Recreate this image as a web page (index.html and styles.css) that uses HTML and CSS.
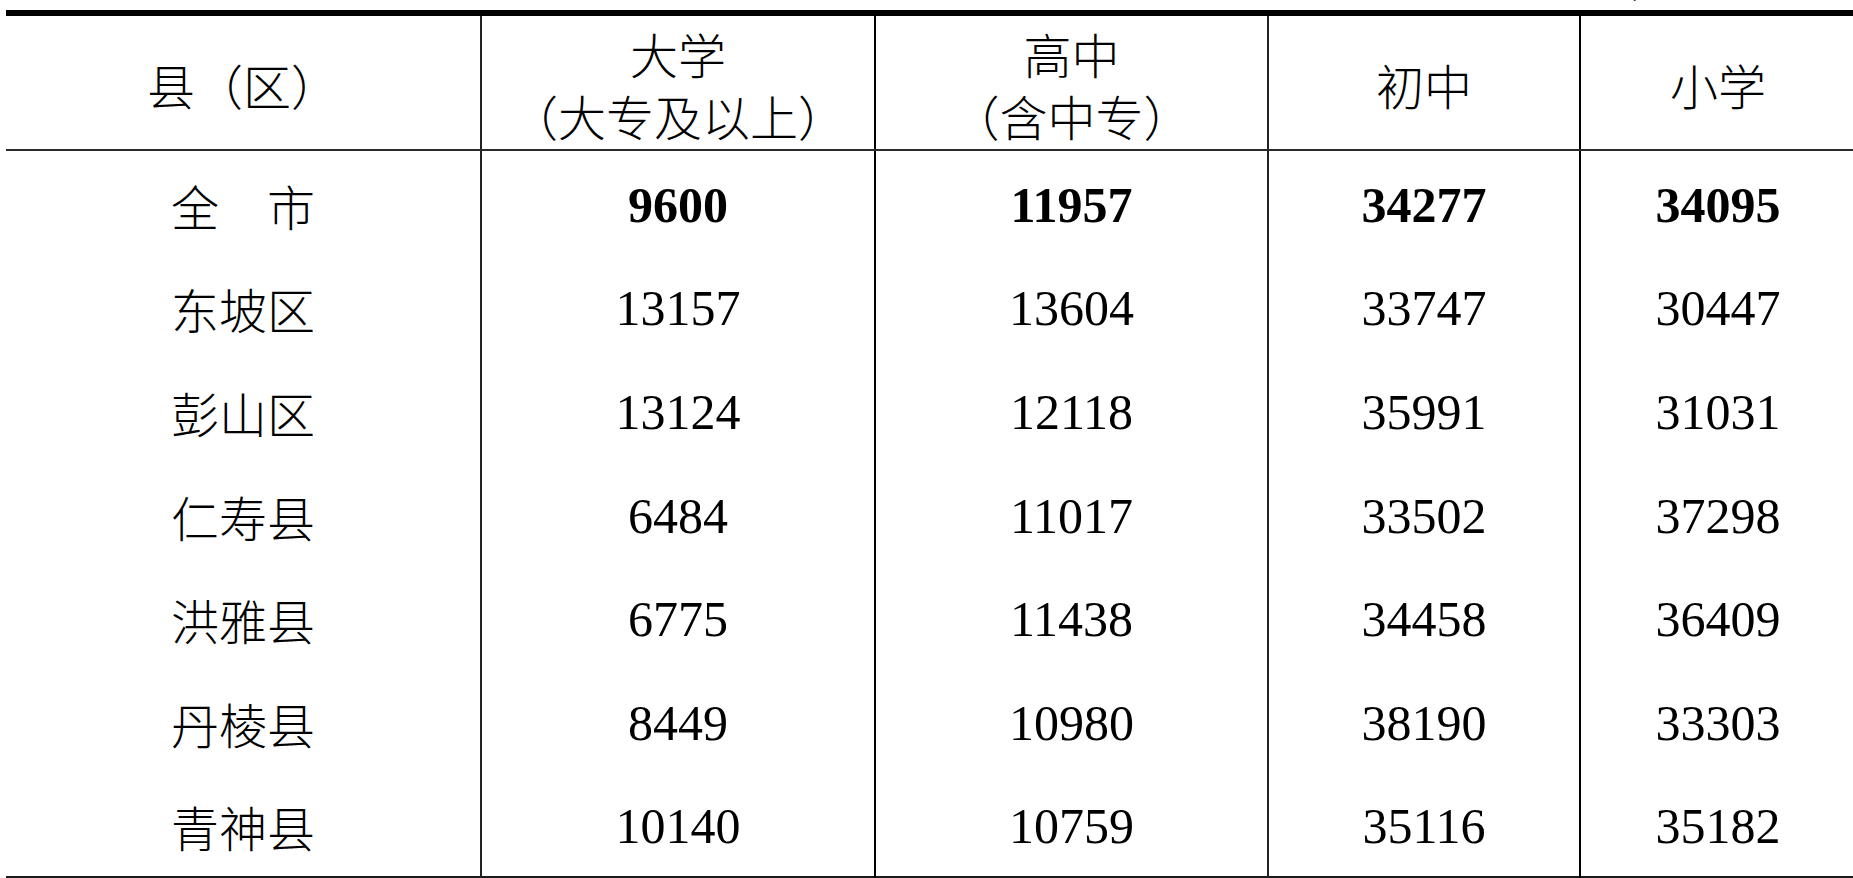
FILE: index.html
```html
<!DOCTYPE html>
<html lang="zh-CN">
<head>
<meta charset="utf-8">
<title>各县（区）每10万人拥有的各类受教育程度人数</title>
<link rel="stylesheet" href="styles.css">
</head>
<body>
<div class="caption"><span class="unit">（单位：人/10万人）</span></div>
<table class="edu">
  <colgroup>
    <col class="c1"><col class="c2"><col class="c3"><col class="c4"><col class="c5">
  </colgroup>
  <thead>
    <tr>
      <th class="cjk">县（区）</th>
      <th class="cjk">大学<br>（大专及以上）</th>
      <th class="cjk">高中<br>（含中专）</th>
      <th class="cjk">初中</th>
      <th class="cjk">小学</th>
    </tr>
  </thead>
  <tbody>
    <tr class="total">
      <td class="cjk name">全　市</td><td>9600</td><td>11957</td><td>34277</td><td>34095</td>
    </tr>
    <tr>
      <td class="cjk name">东坡区</td><td>13157</td><td>13604</td><td>33747</td><td>30447</td>
    </tr>
    <tr>
      <td class="cjk name">彭山区</td><td>13124</td><td>12118</td><td>35991</td><td>31031</td>
    </tr>
    <tr>
      <td class="cjk name">仁寿县</td><td>6484</td><td>11017</td><td>33502</td><td>37298</td>
    </tr>
    <tr>
      <td class="cjk name">洪雅县</td><td>6775</td><td>11438</td><td>34458</td><td>36409</td>
    </tr>
    <tr>
      <td class="cjk name">丹棱县</td><td>8449</td><td>10980</td><td>38190</td><td>33303</td>
    </tr>
    <tr>
      <td class="cjk name">青神县</td><td>10140</td><td>10759</td><td>35116</td><td>35182</td>
    </tr>
  </tbody>
</table>
</body>
</html>
```

FILE: styles.css
```css
html, body {
  margin: 0;
  padding: 0;
  background: #ffffff;
  color: #000000;
  overflow: hidden;
}

body {
  font-family: "Liberation Serif", "Noto Sans CJK SC", serif;
}

.caption {
  height: 10px;
  display: flex;
  justify-content: flex-end;
  padding-right: 50px;
  overflow: visible;
}

.unit {
  font-family: "Noto Sans CJK SC", sans-serif;
  font-weight: 300;
  font-size: 38px;
  line-height: 40px;
  margin-top: -42px;
  height: 40px;
}

.edu {
  margin-left: 6px;
  width: 1849px;
  table-layout: fixed;
  border-collapse: collapse;
  border-top: 6px solid #000;
  border-bottom: 2px solid #1a1a1a;
}

.c1 { width: 475px; }
.c2 { width: 394px; }
.c3 { width: 393px; }
.c4 { width: 312px; }
.c5 { width: 275px; }

.edu th,
.edu td {
  padding: 0;
  text-align: center;
  vertical-align: middle;
  border-left: 2px solid #222;
}

.edu th:first-child,
.edu td:first-child {
  border-left: none;
}

.edu th:nth-child(3),
.edu td:nth-child(3),
.edu th:nth-child(5),
.edu td:nth-child(5) {
  border-left-color: #000;
}

.edu thead th {
  height: 131px;
  border-bottom: 2px solid #2a2a2a;
  font-weight: 300;
  font-size: 48px;
  line-height: 62px;
  padding-top: 2px;
}

.cjk {
  font-family: "Noto Sans CJK SC", sans-serif;
  font-weight: 300;
}

.edu tbody td {
  height: 99.6px;
  font-size: 50px;
  line-height: 56px;
  padding-top: 4px;
}

.edu tbody td.name {
  font-size: 48px;
}

.edu tbody tr.total td {
  font-weight: 700;
}

.edu tbody tr.total td.name {
  font-weight: 300;
}
```
